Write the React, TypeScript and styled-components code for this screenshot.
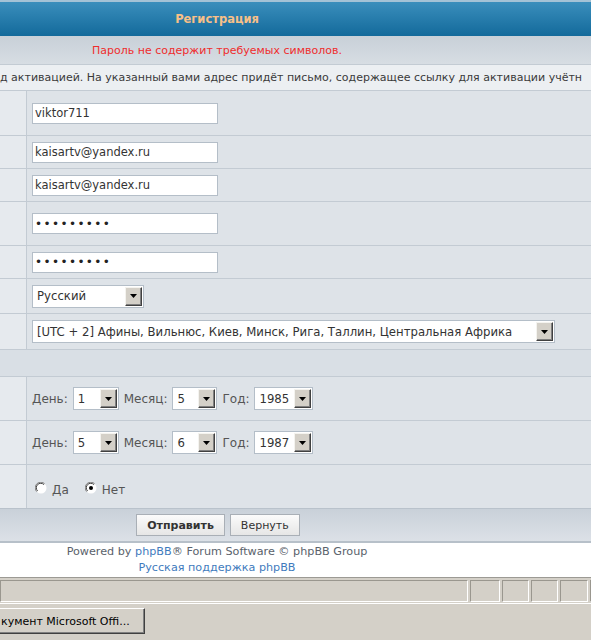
import React from "react";
import styled, {createGlobalStyle} from "styled-components";

const GlobalStyle = createGlobalStyle`
  * {
    box-sizing: border-box;
  }
  html, body {
    margin: 0;
    padding: 0;
  }
  body {
    width: 591px;
    height: 640px;
    overflow: hidden;
    background: #d4d0c8;
    font-family: "DejaVu Sans", Verdana, sans-serif;
    font-size: 11px;
    color: #333;
  }
`;

const Screen = styled.div`
  display: flex;
  flex-direction: column;
  width: 591px;
  height: 640px;
  overflow: hidden;
`;

// browser viewport, the page is scrolled sideways a bit
const Viewport = styled.div`
  height: 577px;
  overflow: hidden;
  background: #fff;
`;

const Page = styled.div`
  width: 834px;
  margin-left: -200px;
  display: flex;
  flex-direction: column;
`;

const Caption = styled.div`
  height: 36px;
  border-top: 2px solid #a3c2d6;
  background: linear-gradient(#3a8ebc, #136a9b);
  display: flex;
  align-items: center;
  justify-content: center;
  color: #f8c088;
  font-weight: bold;
  font-size: 11.5px;
`;

const Notice = styled.div`
  height: 28px;
  background: linear-gradient(#c8d0d8, #d7dde3);
  display: flex;
  align-items: center;
  justify-content: center;
  color: #ef2d2d;
`;

const Hint = styled.div`
  height: 26px;
  border-top: 1px solid #c3cbd3;
  background: #eceff2;
  display: flex;
  align-items: center;
  padding-left: 200px;
  white-space: nowrap;
  color: #3a3a3a;
`;

const Row = styled.div<{ $h: number }>`
  display: grid;
  grid-template-columns: 227px 1fr;
  height: ${p => p.$h}px;
  border-top: 1px solid #c3cbd3;
`;

const LabelCell = styled.div`
  background: #e6eaee;
  border-right: 1px solid #c3cbd3;
`;

const FieldCell = styled.div<{ $gap?: number, $pad?: number }>`
  background: #dee3e8;
  display: flex;
  align-items: center;
  gap: ${p => p.$gap ?? 5}px;
  padding-left: ${p => p.$pad ?? 5}px;
  color: #555;
  font-size: 12px;
`;

const SectionRow = styled.div`
  height: 27px;
  border-top: 1px solid #c3cbd3;
  background: #d9dfe5;
`;

const TextBox = styled.input`
  width: 186px;
  height: 21px;
  border: 1px solid #b4bec8;
  background: #fff;
  padding: 0 2px;
  font: 11.5px "DejaVu Sans", Verdana, sans-serif;
  color: #333;
  outline: none;
  &[type="password"] {
    letter-spacing: 1.4px;
    font-size: 12px;
    color: #222;
  }
`;

const SelectBox = styled.div<{ $w: number }>`
  width: ${p => p.$w}px;
  height: 23px;
  display: flex;
  border: 1px solid #b4bec8;
  background: #fff;
  padding: 1px;
`;

const SelectValue = styled.span`
  flex: 1;
  display: flex;
  align-items: center;
  padding-left: 3px;
  white-space: nowrap;
  overflow: hidden;
  color: #333;
  font-size: 11.7px;
`;

const DropButton = styled.span`
  width: 17px;
  background: #d4d0c8;
  border: 1px solid;
  border-color: #f4f3ef #404040 #404040 #f4f3ef;
  box-shadow: inset -1px -1px #808080;
  display: flex;
  align-items: center;
  justify-content: center;
`;

const RadioLabel = styled.label`
  display: flex;
  align-items: flex-end;
  gap: 5px;
  color: #555;
  > span {
    transform: translateY(3px);
  }
`;

const ButtonBar = styled.div`
  height: 35px;
  border-top: 1px solid #b9c2cb;
  border-bottom: 2px solid #b7c0c9;
  background: linear-gradient(#c9d1d9, #dce1e7);
  display: flex;
  align-items: center;
  justify-content: center;
  gap: 5px;
  padding-left: 2px;
`;

const FormButton = styled.button<{ $main?: boolean }>`
  height: 22px;
  padding: 0 10px;
  font-family: "DejaVu Sans", Verdana, sans-serif;
  font-size: 11px;
  font-weight: ${p => (p.$main ? "bold" : "normal")};
  color: #333;
  background: linear-gradient(#fbfbfb, #e6e6e6);
  border: 1px solid #a9afb6;
  border-radius: 0;
`;

const Footer = styled.div`
  height: 34px;
  display: flex;
  flex-direction: column;
  align-items: center;
  justify-content: center;
  line-height: 16px;
  font-size: 11.2px;
  color: #5a626b;
  a {
    color: #3f7bbd;
    text-decoration: none;
  }
`;

const StatusBar = styled.div`
  height: 27px;
  margin-right: -29px;
  border-top: 1px solid #9c9a94;
  border-bottom: 1px solid #fff;
  display: flex;
  gap: 2px;
  padding: 2px 0 1px 0;
`;

const StatusPane = styled.div<{ $w?: number }>`
  flex: ${p => (p.$w ? `0 0 ${p.$w}px` : "1")};
  border: 1px solid;
  border-color: #9a978f #fff #fff #9a978f;
`;

const Taskbar = styled.div`
  flex: 1;
  display: flex;
  align-items: flex-start;
  padding-top: 4px;
  margin-left: -4px;
`;

const TaskButton = styled.div`
  width: 149px;
  height: 26px;
  display: flex;
  align-items: center;
  padding-left: 4px;
  border: 1px solid;
  border-color: #fff #404040 #404040 #fff;
  box-shadow: inset -1px -1px #808080;
  background: #d4d0c8;
  font-size: 11px;
  color: #000;
  white-space: nowrap;
`;

const Arrow = () => (
    <svg width="7" height="4" viewBox="0 0 7 4">
        <polygon points="0,0 7,0 3.5,4" fill="#000"/>
    </svg>
)

const Select: React.FC<{ width: number, value: string }> = ({width, value}) => (
    <SelectBox $w={width}>
        <SelectValue>{value}</SelectValue>
        <DropButton><Arrow/></DropButton>
    </SelectBox>
)

const Radio: React.FC<{ checked?: boolean }> = ({checked}) => (
    <svg width="12" height="12" viewBox="0 0 12 12">
        <circle cx="6" cy="6" r="5.5" fill="#fff"/>
        <path d="M1.8 9.7 A5.5 5.5 0 0 1 9.7 1.8" fill="none" stroke="#808080" strokeWidth="1"/>
        <path d="M2.6 8.9 A4.4 4.4 0 0 1 8.9 2.6" fill="none" stroke="#404040" strokeWidth="1"/>
        {checked && <circle cx="6" cy="6" r="2" fill="#000"/>}
    </svg>
)

const FormRow: React.FC<{ h: number, gap?: number, pad?: number, children?: React.ReactNode }> =
    ({h, gap, pad, children}) => (
        <Row $h={h}>
            <LabelCell/>
            <FieldCell $gap={gap} $pad={pad}>{children}</FieldCell>
        </Row>
    )

const DateFields: React.FC<{ day: string, month: string, year: string }> = ({day, month, year}) => (
    <>
        <span>День:</span>
        <Select width={46} value={day}/>
        <span>Месяц:</span>
        <Select width={45} value={month}/>
        <span>Год:</span>
        <Select width={59} value={year}/>
    </>
)

export default function App() {
    return (
        <Screen>
            <GlobalStyle/>
            <Viewport>
                <Page>
                    <Caption>Регистрация</Caption>
                    <Notice>Пароль не содержит требуемых символов.</Notice>
                    <Hint>д активацией. На указанный вами адрес придёт письмо, содержащее ссылку для активации учётн</Hint>
                    <FormRow h={45}><TextBox defaultValue="viktor711"/></FormRow>
                    <FormRow h={33}><TextBox defaultValue="kaisartv@yandex.ru"/></FormRow>
                    <FormRow h={33}><TextBox defaultValue="kaisartv@yandex.ru"/></FormRow>
                    <FormRow h={44}><TextBox type="password" defaultValue="viktor711"/></FormRow>
                    <FormRow h={33}><TextBox type="password" defaultValue="viktor711"/></FormRow>
                    <FormRow h={35}><Select width={112} value="Русский"/></FormRow>
                    <FormRow h={36}>
                        <Select width={523} value="[UTC + 2] Афины, Вильнюс, Киев, Минск, Рига, Таллин, Центральная Африка"/>
                    </FormRow>
                    <SectionRow/>
                    <FormRow h={44}><DateFields day="1" month="5" year="1985"/></FormRow>
                    <FormRow h={44}><DateFields day="5" month="6" year="1987"/></FormRow>
                    <FormRow h={44} gap={16} pad={8}>
                        <RadioLabel><Radio/><span>Да</span></RadioLabel>
                        <RadioLabel><Radio checked/><span>Нет</span></RadioLabel>
                    </FormRow>
                    <ButtonBar>
                        <FormButton $main>Отправить</FormButton>
                        <FormButton>Вернуть</FormButton>
                    </ButtonBar>
                    <Footer>
                        <div>Powered by <a href="#">phpBB</a>® Forum Software © phpBB Group</div>
                        <a href="#">Русская поддержка phpBB</a>
                    </Footer>
                </Page>
            </Viewport>
            <StatusBar>
                <StatusPane/>
                <StatusPane $w={30}/>
                <StatusPane $w={27}/>
                <StatusPane $w={27}/>
                <StatusPane $w={28}/>
                <StatusPane $w={30}/>
            </StatusBar>
            <Taskbar>
                <TaskButton>кумент Microsoft Offi...</TaskButton>
            </Taskbar>
        </Screen>
    )
}
